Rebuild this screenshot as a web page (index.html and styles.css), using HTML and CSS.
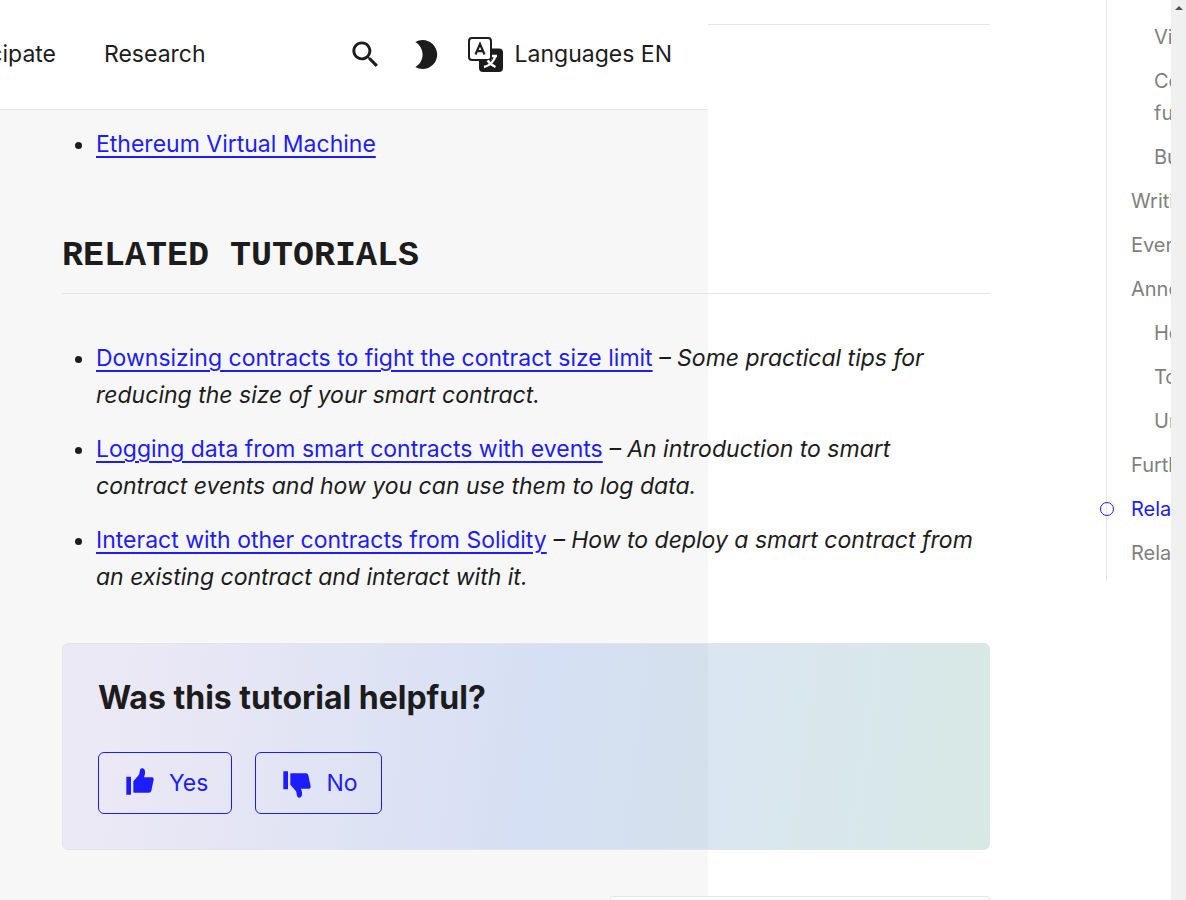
FILE: index.html
```html
<!DOCTYPE html>
<html lang="en">
<head>
<meta charset="utf-8">
<title>Related tutorials</title>
<link rel="stylesheet" href="styles.css">
</head>
<body>
<div class="window">
  <div class="page">
    <header class="topbar">
      <nav class="nav">
        <a href="#participate">Participate</a>
        <a href="#research">Research</a>
      </nav>
      <div class="tools">
        <button class="tool" type="button" aria-label="Search">
          <svg class="icon" viewBox="0 0 24 24"><path d="M15.5 14h-.79l-.28-.27C15.41 12.59 16 11.11 16 9.5 16 5.91 13.09 3 9.5 3S3 5.91 3 9.5 5.91 16 9.5 16c1.61 0 3.09-.59 4.23-1.57l.27.28v.79l5 4.99L20.49 19l-4.99-5zm-6 0C7.01 14 5 11.99 5 9.5S7.01 5 9.5 5 14 7.01 14 9.5 11.99 14 9.5 14z"/></svg>
        </button>
        <button class="tool" type="button" aria-label="Dark mode">
          <svg class="icon" viewBox="0 0 24 24"><path d="M10 2c-1.82 0-3.53.5-5 1.35C7.99 5.08 10 8.3 10 12s-2.01 6.92-5 8.65C6.47 21.5 8.18 22 10 22c5.52 0 10-4.48 10-10S15.52 2 10 2z"/></svg>
        </button>
        <a class="languages" href="#languages">
          <svg class="icon" viewBox="0 0 35 35"><path d="M24 11.500h7a4 4 0 0 1 4 4V31a4 4 0 0 1-4 4H15a4 4 0 0 1-4-4v-7h9a4 4 0 0 0 4-4z"/><rect x="1" y="1" width="22" height="22" rx="3" fill="none" stroke="currentColor" stroke-width="2"/><path d="M7.500 17.500 12 7l4.500 10.500M9 14.200h6" fill="none" stroke="currentColor" stroke-width="2.200"/><path d="M24 19h5M16 30c5-1.300 9.500-4.500 11.500-11M19.500 23.500c2 3 4.500 5 8 6.500" fill="none" stroke="#fff" stroke-width="2.400"/></svg>
          <span>Languages EN</span>
        </a>
      </div>
    </header>

    <main class="content">
      <hr class="rule">
      <ul class="list">
        <li><a href="#evm">Ethereum Virtual Machine</a></li>
      </ul>
      <h2 class="section-title">RELATED TUTORIALS</h2>
      <ul class="list">
        <li><a href="#downsizing">Downsizing contracts to fight the contract size limit</a> <em>– Some practical tips for reducing the size of your smart contract.</em></li>
        <li><a href="#logging">Logging data from smart contracts with events</a> <em>– An introduction to smart contract events and how you can use them to log data.</em></li>
        <li><a href="#interact">Interact with other contracts from Solidity</a> <em>– How to deploy a smart contract from an existing contract and interact with it.</em></li>
      </ul>
      <section class="feedback">
        <h3 class="feedback-title">Was this tutorial helpful?</h3>
        <div class="feedback-actions">
          <button class="vote" type="button">
            <svg class="thumb" viewBox="0 0 84 90"><path d="M1 26h14v54H1zM22 40l17-20C42 14 40 1 48 1c8 0 10 7 9 16l-3 11h25q5 1 4 7l-7 33q-1 5-6 6H24q-2 0-2-2z"/></svg>
            Yes
          </button>
          <button class="vote" type="button">
            <svg class="thumb" viewBox="0 0 84 90"><path transform="matrix(1 0 0 -1 0 90)" d="M1 26h14v54H1zM22 40l17-20C42 14 40 1 48 1c8 0 10 7 9 16l-3 11h25q5 1 4 7l-7 33q-1 5-6 6H24q-2 0-2-2z"/></svg>
            No
          </button>
        </div>
      </section>
      <div class="next-card"></div>
    </main>

    <aside class="toc">
      <ul>
        <li class="sub"><a href="#view">View functions</a></li>
        <li class="sub"><a href="#constructor">Constructor<br>functions</a></li>
        <li class="sub"><a href="#built-in">Built-in functions</a></li>
        <li><a href="#writing">Writing functions</a></li>
        <li><a href="#events">Events and logs</a></li>
        <li><a href="#annotated">Annotated examples</a></li>
        <li class="sub"><a href="#hello">Hello world</a></li>
        <li class="sub"><a href="#token">Token</a></li>
        <li class="sub"><a href="#unique">Unique digital asset</a></li>
        <li><a href="#further">Further reading</a></li>
        <li class="active"><a href="#topics">Related topics</a></li>
        <li><a href="#tutorials">Related tutorials</a></li>
      </ul>
    </aside>
  </div>
  <div class="scrollbar"><svg class="arrow" viewBox="0 0 8 4"><path d="M0 4 4 0l4 4z"/></svg></div>
</div>
</body>
</html>
```
FILE: styles.css
```css
* {
  box-sizing: border-box;
}

body {
  margin: 0;
  background: #fff;
  color: #1c1c1c;
  font: 23px/37px Inter, "Liberation Sans", sans-serif;
}

a {
  color: inherit;
  text-decoration: none;
}

ul {
  margin: 0;
  padding: 0;
}

button {
  font: inherit;
  color: inherit;
  background: none;
  border: 0;
  padding: 0;
}

.window {
  display: flex;
  height: 100vh;
  overflow: hidden;
}

.page {
  --sheet: calc(100% - 463px);
  position: relative;
  display: flex;
  flex: 1;
  min-width: 0;
  overflow: hidden;
  background: linear-gradient(#f7f7f7, #f7f7f7) left top / var(--sheet) 100% no-repeat;
}

.topbar {
  position: absolute;
  z-index: 1;
  top: 0;
  left: 0;
  width: var(--sheet);
  height: 110px;
  padding: 0 36px;
  display: flex;
  align-items: center;
  justify-content: flex-end;
  overflow: hidden;
  background: #fff;
  border-bottom: 1px solid #e5e5e5;
}

.nav {
  display: flex;
  gap: 48px;
  margin-right: 142px;
}

.tools {
  display: flex;
  align-items: center;
  gap: 25px;
}

.tool,
.languages {
  display: flex;
  align-items: center;
  gap: 12px;
  white-space: nowrap;
}

.icon {
  display: block;
  flex: none;
  width: 35px;
  height: 35px;
  fill: currentColor;
}

.content {
  flex: 1;
  min-width: 0;
  padding: 24px 0 0 62px;
}

.rule {
  margin: 0 0 101px;
  border: 0;
  border-top: 1px solid #e5e5e5;
}

.list {
  padding: 0 4px 0 34px;
}

.list li + li {
  margin-top: 17px;
}

.list a {
  color: #1c1cff;
  text-decoration: underline;
  text-decoration-thickness: 2px;
  text-underline-offset: 4px;
}

.section-title {
  margin: 69px 0 46px;
  padding-bottom: 12px;
  border-bottom: 1px solid #e5e5e5;
  font: bold 35px/49px "Liberation Mono", monospace;
}

.feedback {
  margin-top: 47px;
  padding: 35px;
  border: 1px solid #e5e5e5;
  border-radius: 6px;
  background: linear-gradient(98deg, rgba(200, 188, 240, .25) 7%, rgba(112, 152, 232, .25) 52%, rgba(96, 164, 152, .25) 98%) border-box;
}

.feedback-title {
  margin: 0 0 36px;
  font-size: 32px;
  line-height: 37px;
  font-weight: 700;
}

.feedback-actions {
  display: flex;
  gap: 23px;
}

.vote {
  display: flex;
  align-items: center;
  gap: 15px;
  height: 62px;
  padding: 0 23px 0 27px;
  border: 1px solid #1c1cff;
  border-radius: 6px;
  color: #1c1cff;
}

.thumb {
  width: 28px;
  height: 30px;
  fill: currentColor;
}

.next-card {
  width: 380px;
  height: 120px;
  margin: 46px 0 0 auto;
  border: 1px solid #e5e5e5;
  border-radius: 3px;
  background: #fff;
}

.toc {
  flex: none;
  width: 65px;
  margin-left: 116px;
  color: #7f7f7f;
  font-size: 20px;
  line-height: 32px;
  white-space: nowrap;
}

.toc ul {
  padding: 21px 0 0 24px;
  border-left: 1px solid #e5e5e5;
  list-style: none;
}

.toc li {
  position: relative;
  padding-bottom: 12px;
}

.toc .sub {
  padding-left: 23px;
}

.toc .active {
  color: #1c1cff;
}

.toc .active::before {
  content: "";
  box-sizing: border-box;
  position: absolute;
  top: 9px;
  left: -31px;
  width: 14px;
  height: 14px;
  border: 1px solid #1c1cff;
  border-radius: 50%;
}

.scrollbar {
  flex: none;
  width: 15px;
  padding-top: 6px;
  background: #f0f0f0;
}

.arrow {
  display: block;
  width: 8px;
  height: 4px;
  margin: 0 auto;
  fill: #505050;
}
```
